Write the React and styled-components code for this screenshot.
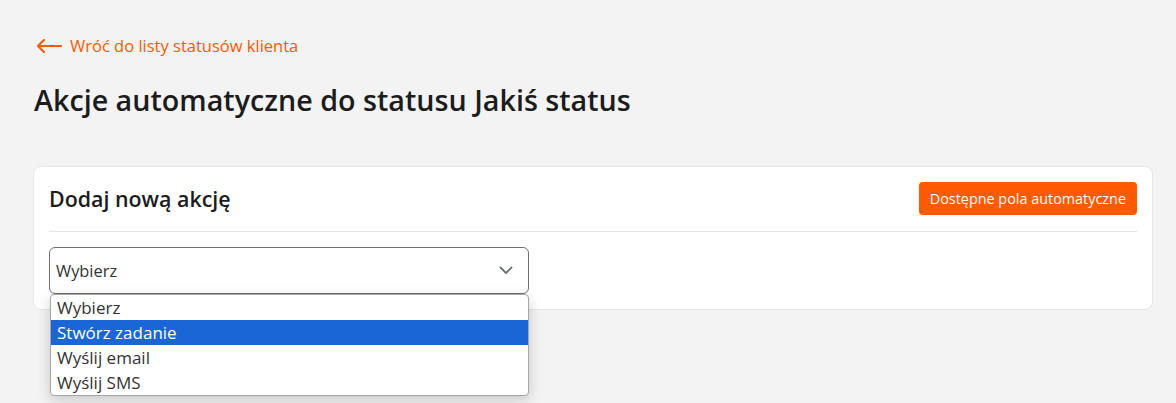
import styled, { createGlobalStyle } from 'styled-components';

const GlobalStyle = createGlobalStyle`
  * {
    box-sizing: border-box;
  }

  body {
    margin: 0;
    background: #f3f3f3;
    font-family: 'Open Sans', 'Noto Sans', sans-serif;
    color: #1f1f1f;
  }
`;

const orange = '#ff5a00';

const Page = styled.div`
  padding: 34px 23px 0 33px;
  min-height: 403px;
`;

const BackLink = styled.a`
  display: inline-flex;
  align-items: center;
  gap: 8px;
  margin-left: 3px;
  color: ${orange};
  font-size: 16.5px;
  text-decoration: none;
  cursor: pointer;
`;

const Title = styled.h1`
  margin: 22px 0 0 1px;
  font-size: 28.7px;
  font-weight: 600;
  color: #1c1c1c;
`;

const Card = styled.section`
  position: relative;
  margin-top: 47px;
  padding: 15px;
  background: #fff;
  border: 1px solid #e6e6e6;
  border-radius: 8px;
`;

const CardHeader = styled.div`
  display: flex;
  align-items: center;
  justify-content: space-between;
  padding-bottom: 16px;
  border-bottom: 1px solid #e4e4e4;
`;

const CardTitle = styled.h2`
  margin: 0;
  font-size: 21.4px;
  font-weight: 600;
  color: #1c1c1c;
`;

const Button = styled.button`
  height: 33px;
  padding: 0 11px;
  border: none;
  border-radius: 4px;
  background: ${orange};
  color: #fff;
  font-family: inherit;
  font-size: 14.4px;
  cursor: pointer;
`;

const Field = styled.div`
  position: relative;
  width: 480px;
  margin-top: 15px;
`;

const SelectBox = styled.div`
  display: flex;
  align-items: center;
  justify-content: space-between;
  height: 47px;
  padding: 0 15px 0 6px;
  border: 1px solid #6f6f73;
  border-radius: 6px;
  font-size: 16.4px;
  color: #333;
`;

const Options = styled.ul`
  position: absolute;
  top: 47px;
  left: 1px;
  right: 0;
  margin: 0;
  padding: 0;
  list-style: none;
  background: #fff;
  border: 1px solid #a6a6a6;
  border-radius: 4px;
  box-shadow: 0 4px 14px rgba(0, 0, 0, 0.18);
  overflow: hidden;
  z-index: 2;
`;

const Option = styled.li`
  height: 25px;
  padding: 0 6px;
  font-size: 17px;
  line-height: 25px;
  color: ${(p) => (p.$active ? '#fff' : '#333')};
  background: ${(p) => (p.$active ? '#1a66d6' : 'transparent')};
`;

const ArrowLeft = () => (
  <svg width="26" height="14" viewBox="0 0 26 14" fill="none">
    <path
      d="M25 7H2M8 1L2 7l6 6"
      stroke={orange}
      strokeWidth="2.2"
      strokeLinecap="round"
      strokeLinejoin="round"
    />
  </svg>
);

const Chevron = () => (
  <svg width="14" height="9" viewBox="0 0 14 9" fill="none">
    <path d="M1.5 1.5L7 7l5.5-5.5" stroke="#6b6f7a" strokeWidth="1.8" strokeLinecap="round" strokeLinejoin="round" />
  </svg>
);

const options = ['Wybierz', 'Stwórz zadanie', 'Wyślij email', 'Wyślij SMS'];

const App = () => (
  <>
    <GlobalStyle />
    <Page>
      <BackLink>
        <ArrowLeft />
        Wróć do listy statusów klienta
      </BackLink>
      <Title>Akcje automatyczne do statusu Jakiś status</Title>
      <Card>
        <CardHeader>
          <CardTitle>Dodaj nową akcję</CardTitle>
          <Button type="button">Dostępne pola automatyczne</Button>
        </CardHeader>
        <Field>
          <SelectBox>
            Wybierz
            <Chevron />
          </SelectBox>
          <Options>
            {options.map((o) => (
              <Option key={o} $active={o === 'Stwórz zadanie'}>
                {o}
              </Option>
            ))}
          </Options>
        </Field>
      </Card>
    </Page>
  </>
);

export default App;
